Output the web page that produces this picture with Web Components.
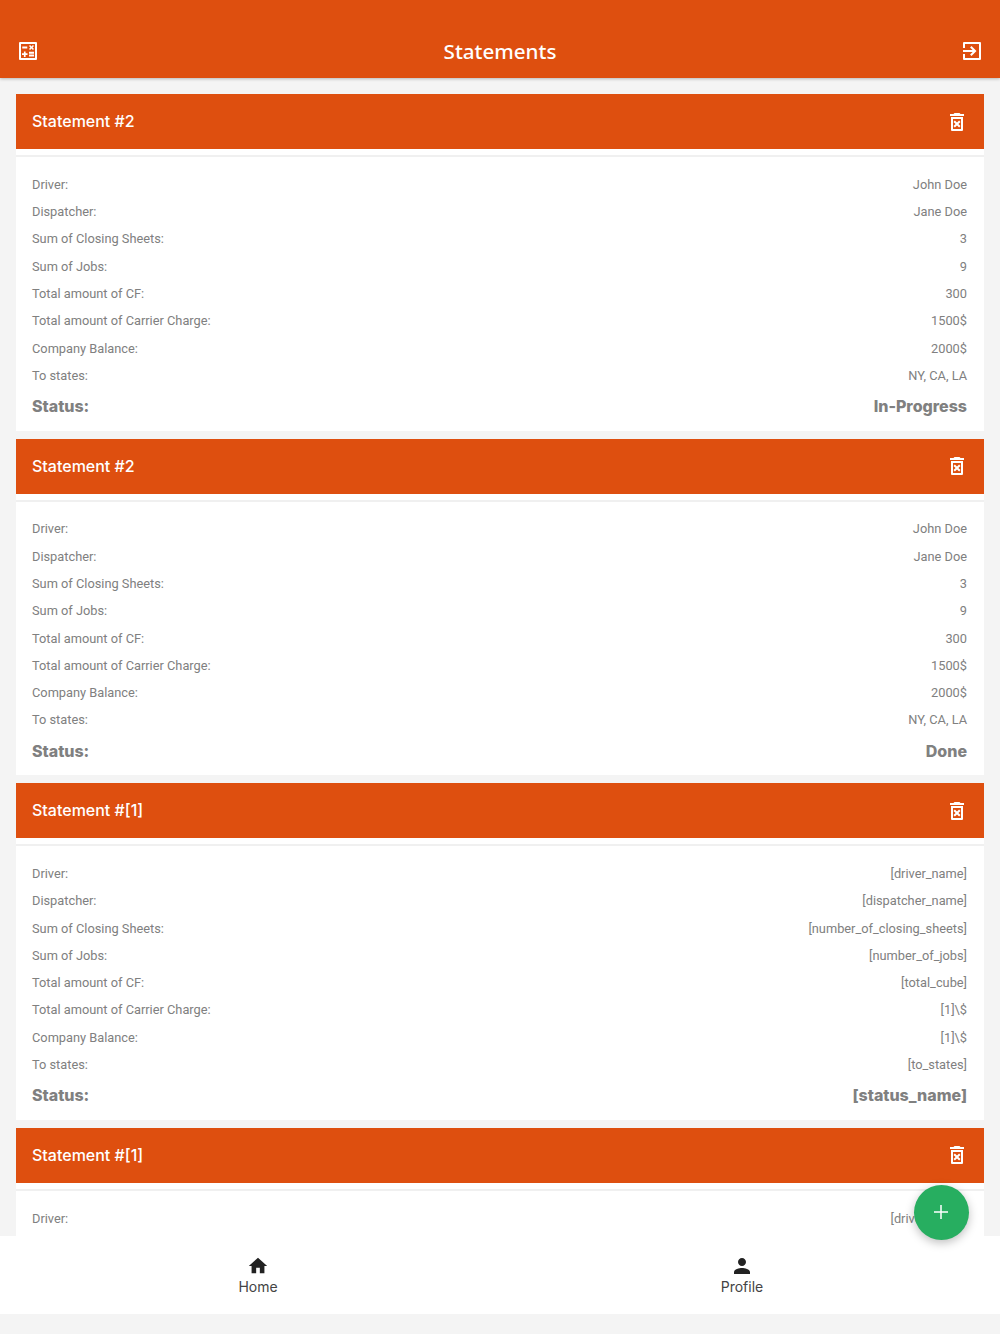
<!DOCTYPE html>
<html>
<head>
<meta charset="utf-8">
<title>Statements</title>
<style>
    html, body { margin: 0; padding: 0; background: #f4f4f4; }
    body { font-family: "Inter", "Liberation Sans", sans-serif; }
</style>
</head>
<body>
<app-shell>
    <app-header slot="header" title="Statements"></app-header>

    <statement-card title="Statement #2" driver="John Doe" dispatcher="Jane Doe" sheets="3" jobs="9" cube="300" carrier="1500$" balance="2000$" states="NY, CA, LA" status="In-Progress"></statement-card>
    <statement-card title="Statement #2" driver="John Doe" dispatcher="Jane Doe" sheets="3" jobs="9" cube="300" carrier="1500$" balance="2000$" states="NY, CA, LA" status="Done"></statement-card>
    <statement-card title="Statement #[1]" driver="[driver_name]" dispatcher="[dispatcher_name]" sheets="[number_of_closing_sheets]" jobs="[number_of_jobs]" cube="[total_cube]" carrier="[1]\$" balance="[1]\$" states="[to_states]" status="[status_name]"></statement-card>
    <!-- the last card runs under the tab bar, only its first row is in view -->
    <statement-card title="Statement #[1]" driver="[driver_name]" peek></statement-card>

    <fab-button slot="fab"></fab-button>
    <tab-bar slot="tabs">
        <tab-item label="Home" icon="home"></tab-item>
        <tab-item label="Profile" icon="person"></tab-item>
    </tab-bar>
</app-shell>

<script>
const ICONS = {
    calc: "M20,3H4A1,1 0 0,0 3,4V20A1,1 0 0,0 4,21H20A1,1 0 0,0 21,20V4A1,1 0 0,0 20,3M19,19H5V5H19V19M6.25,7.5H11.25V9.5H6.25V7.5M13,15.5H18V17.5H13V15.5M13,12.75H18V14.75H13V12.75M7.9,18H9.6V16H11.5V14.3H9.6V12.5H7.9V14.3H6V16H7.9V18M14.09,10.95L15.5,9.54L16.91,10.95L18,9.89L16.59,8.47L18,7.06L16.91,6L15.5,7.41L14.09,6L13,7.06L14.41,8.47L13,9.89L14.09,10.95Z",
    exit: "M20,3H4A1,1 0 0,0 3,4V9H5V5H19V19H5V15H3V20A1,1 0 0,0 4,21H20A1,1 0 0,0 21,20V4A1,1 0 0,0 20,3M10.08,15.58L11.5,17L16.5,12L11.5,7L10.08,8.41L12.67,11H3V13H12.67L10.08,15.58Z",
    trash: "M14.12,10.47L12,12.59L9.87,10.47L8.46,11.88L10.59,14L8.47,16.12L9.88,17.53L12,15.41L14.12,17.53L15.53,16.12L13.41,14L15.53,11.88L14.12,10.47M15.5,4L14.5,3H9.5L8.5,4H5V6H19V4H15.5M6,20A1,1 0 0,0 7,21H17A1,1 0 0,0 18,20V7H6V20M8,9H16V19H8V9Z",
    home: "M10 20v-6h4v6h5v-8h3L12 3 2 12h3v8z",
    person: "M12 12c2.21 0 4-1.79 4-4s-1.79-4-4-4-4 1.79-4 4 1.79 4 4 4zm0 2c-2.67 0-8 1.34-8 4v2h16v-2c0-2.66-5.33-4-8-4z",
    plus: "M19,12.75H12.75V19H11.25V12.75H5V11.25H11.25V5H12.75V11.25H19V12.75Z"
};

function svgIcon(name, size) {
    return `<svg width="${size}" height="${size}" viewBox="0 0 24 24" fill="currentColor"><path d="${ICONS[name]}"/></svg>`;
}

class AppShell extends HTMLElement {
    constructor() {
        super();
        this.attachShadow({ mode: "open" }).innerHTML = `
            <style>
                :host { display: flex; flex-direction: column; height: 1334px; position: relative; overflow: hidden; background: #f4f4f4; }
                main { flex: 1; min-height: 0; overflow: hidden; padding: 16px 16px 0; display: flex; flex-direction: column; gap: 8px; }
                footer { padding-bottom: 20px; }
            </style>
            <slot name="header"></slot>
            <main><slot></slot></main>
            <footer><slot name="tabs"></slot></footer>
            <slot name="fab"></slot>
        `;
    }
}

class AppHeader extends HTMLElement {
    connectedCallback() {
        this.attachShadow({ mode: "open" }).innerHTML = `
            <style>
                :host { display: flex; align-items: center; justify-content: space-between; flex: none; box-sizing: border-box; height: 78px; padding: 24px 16px 0; background: #de4f0f; color: #fff; box-shadow: 0 1px 3px rgba(0,0,0,.25); position: relative; z-index: 1; }
                h1 { margin: 0 0 1px; font: 500 20.6px "Noto Sans", sans-serif; }
                svg { display: block; }
            </style>
            ${svgIcon("calc", 24)}
            <h1>${this.getAttribute("title")}</h1>
            ${svgIcon("exit", 24)}
        `;
    }
}

class StatementCard extends HTMLElement {
    connectedCallback() {
        const a = (n) => this.getAttribute(n);
        let rows = [
            ["Driver:", a("driver")],
            ["Dispatcher:", a("dispatcher")],
            ["Sum of Closing Sheets:", a("sheets")],
            ["Sum of Jobs:", a("jobs")],
            ["Total amount of CF:", a("cube")],
            ["Total amount of Carrier Charge:", a("carrier")],
            ["Company Balance:", a("balance")],
            ["To states:", a("states")]
        ];
        const peek = this.hasAttribute("peek");
        if (peek) rows = rows.slice(0, 1);
        this.attachShadow({ mode: "open" }).innerHTML = `
            <style>
                :host { display: block; flex: none; background: #fff; }
                header { display: flex; align-items: center; justify-content: space-between; height: 55px; padding: 0 15px 0 16px; background: #de4f0f; color: #fff; font-size: 16px; font-weight: 500; }
                header span { margin-bottom: 1px; }
                svg { display: block; }
                .gap { height: 6px; border-bottom: 2px solid #f0f0f0; }
                .body { padding: 13.7px 17px 7.5px 16px; color: #808080; font: 12.8px "Roboto", sans-serif; }
                .row { display: flex; justify-content: space-between; align-items: center; height: 27.3px; }
                .status { font: 800 16px "Inter", sans-serif; height: 34px; }
            </style>
            <header><span>${a("title")}</span>${svgIcon("trash", 24)}</header>
            <div class="gap"></div>
            <div class="body">
                ${rows.map((r) => `<div class="row"><span>${r[0]}</span><span>${r[1]}</span></div>`).join("")}
                ${peek ? "" : `<div class="row status"><span>Status:</span><span>${a("status")}</span></div>`}
            </div>
        `;
    }
}

class TabBar extends HTMLElement {
    constructor() {
        super();
        this.attachShadow({ mode: "open" }).innerHTML = `
            <style>
                :host { display: grid; grid-template-columns: 1fr 1fr; box-sizing: border-box; height: 78px; padding: 0 16px; background: #fff; }
            </style>
            <slot></slot>
        `;
    }
}

class TabItem extends HTMLElement {
    connectedCallback() {
        const icon = this.getAttribute("icon");
        this.attachShadow({ mode: "open" }).innerHTML = `
            <style>
                :host { display: flex; flex-direction: column; align-items: center; padding-top: 18px; color: #222; font-size: 14px; }
                .icon { height: 24px; display: flex; align-items: center; }
                svg { display: block; }
                span { color: #444; line-height: 17px; }
            </style>
            <div class="icon">${svgIcon(icon, icon === "home" ? 22 : 24)}</div>
            <span>${this.getAttribute("label")}</span>
        `;
    }
}

class FabButton extends HTMLElement {
    connectedCallback() {
        this.attachShadow({ mode: "open" }).innerHTML = `
            <style>
                :host { position: absolute; left: 914px; top: 1185px; width: 55px; height: 55px; border-radius: 50%; background: #27ae60; color: #fff; display: flex; align-items: center; justify-content: center; box-shadow: 0 3px 10px rgba(0,0,0,.25); }
                svg { display: block; margin: -1px 0 0 -1px; }
            </style>
            ${svgIcon("plus", 24)}
        `;
    }
}

customElements.define("app-shell", AppShell);
customElements.define("app-header", AppHeader);
customElements.define("statement-card", StatementCard);
customElements.define("tab-bar", TabBar);
customElements.define("tab-item", TabItem);
customElements.define("fab-button", FabButton);
</script>
</body>
</html>
